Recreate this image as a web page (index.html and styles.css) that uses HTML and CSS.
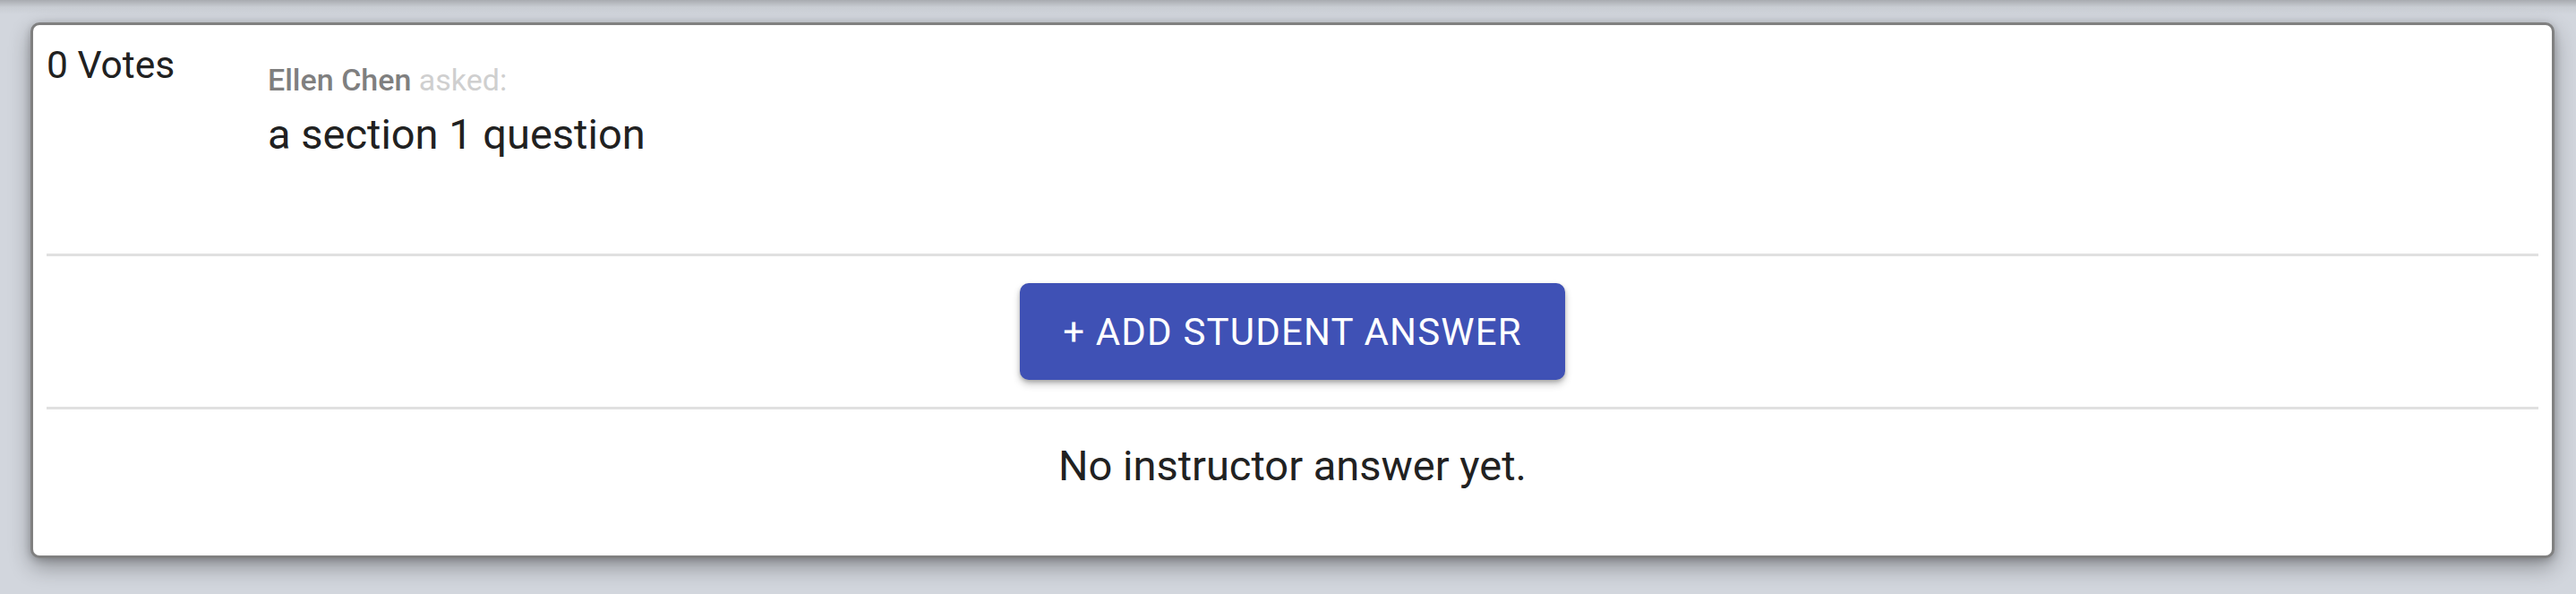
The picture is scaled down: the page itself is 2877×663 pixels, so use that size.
FILE: index.html
```html
<!DOCTYPE html>
<html lang="en">
<head>
<meta charset="utf-8">
<title>Question</title>
<link rel="stylesheet" href="styles.css">
</head>
<body>
<div class="card">
  <div class="question-row">
    <div class="votes">0 Votes</div>
    <div class="question">
      <div class="author"><span class="name">Ellen Chen</span> <span class="asked">asked:</span></div>
      <div class="question-text">a section 1 question</div>
    </div>
  </div>
  <div class="divider"></div>
  <div class="actions">
    <button class="add-btn" type="button">+ Add Student Answer</button>
  </div>
  <div class="divider"></div>
  <div class="instructor">No instructor answer yet.</div>
</div>
</body>
</html>
```

FILE: styles.css
```css
html, body {
  margin: 0;
  padding: 0;
}

body {
  height: 663px;
  overflow: hidden;
  background: linear-gradient(#a8abb0 0px, #c9cdd3 8px, #d2d6dd 16px, #d2d6dd 100%);
  font-family: Roboto, "Noto Sans", "Liberation Sans", sans-serif;
  color: #212121;
  padding-top: 25px;
  box-sizing: border-box;
}

.card {
  margin: 0 24px 0 34px;
  background: #ffffff;
  border: 3px solid #808080;
  border-radius: 10px;
  padding: 0 15px;
  box-shadow: 0 10px 24px rgba(0, 0, 0, 0.32), 0 2px 8px rgba(0, 0, 0, 0.2);
}

.question-row {
  display: flex;
  box-sizing: border-box;
  height: 255px;
  padding-top: 20px;
}

.votes {
  width: 247px;
  flex: none;
  font-size: 42.5px;
  line-height: normal;
}

.question {
  margin-top: 21px;
}

.author {
  font-size: 34px;
  line-height: normal;
}

.name {
  font-weight: 500;
  color: #7f7f7f;
}

.asked {
  color: #cfcfcf;
}

.question-text {
  margin-top: 13px;
  font-size: 47px;
  line-height: normal;
}

.divider {
  height: 3px;
  background: #e0e0e0;
}

.actions {
  display: flex;
  justify-content: center;
  padding: 30px 0;
}

.add-btn {
  height: 108px;
  padding: 0 48px;
  border: none;
  border-radius: 10px;
  background: #3f51b5;
  color: #ffffff;
  font-family: Roboto, "Noto Sans", "Liberation Sans", sans-serif;
  font-size: 42px;
  font-weight: 400;
  letter-spacing: 0.028em;
  text-transform: uppercase;
  box-shadow: 0 5px 8px rgba(0, 0, 0, 0.22), 0 2px 4px rgba(0, 0, 0, 0.2);
}

.instructor {
  box-sizing: border-box;
  height: 163px;
  padding-top: 35px;
  text-align: center;
  font-size: 47px;
  line-height: normal;
}
```
